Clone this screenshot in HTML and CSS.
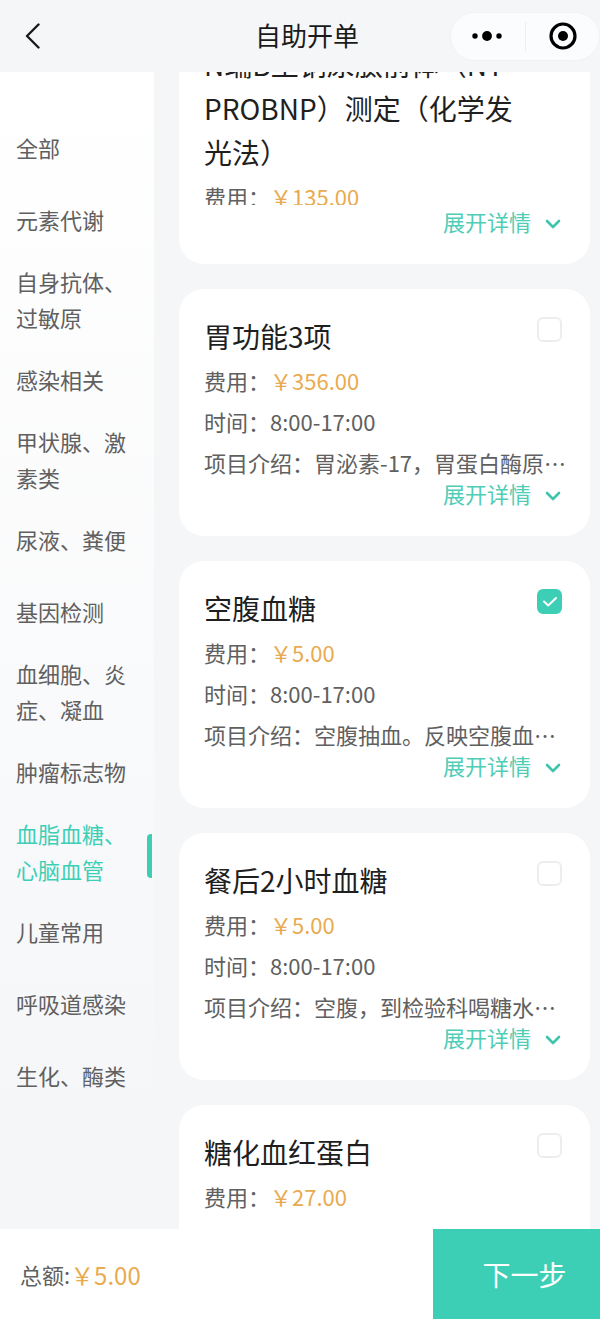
FILE: index.html
```
<!DOCTYPE html>
<html lang="zh-CN">
<head>
<meta charset="utf-8">
<meta name="viewport" content="width=device-width, initial-scale=1">
<title>自助开单</title>
<link rel="stylesheet" href="styles.css">
</head>
<body>
<div class="page">
  <header class="header">
    <button class="back" type="button" aria-label="返回">
      <svg width="16" height="28" viewBox="0 0 16 28" fill="none" stroke="currentColor" stroke-width="2.4" stroke-linecap="round" stroke-linejoin="round"><path d="M14.5 2.5 3 14l11.500 11.5"/></svg>
    </button>
    <h1 class="header-title">自助开单</h1>
    <div class="capsule">
      <button class="capsule-btn" type="button" aria-label="更多">
        <svg width="32" height="12" viewBox="0 0 32 12" fill="currentColor"><circle cx="4" cy="6" r="2.7"/><circle cx="16" cy="6" r="4.9"/><circle cx="28" cy="6" r="2.7"/></svg>
      </button>
      <button class="capsule-btn capsule-close" type="button" aria-label="关闭">
        <svg width="28" height="28" viewBox="0 0 28 28"><circle cx="14" cy="14" r="12" fill="none" stroke="currentColor" stroke-width="3.2"/><circle cx="14" cy="14" r="5" fill="currentColor"/></svg>
      </button>
    </div>
  </header>

  <div class="content">
    <nav class="sidebar">
      <button class="category" type="button">全部</button>
      <button class="category" type="button">元素代谢</button>
      <button class="category" type="button">自身抗体、<br>过敏原</button>
      <button class="category" type="button">感染相关</button>
      <button class="category" type="button">甲状腺、激<br>素类</button>
      <button class="category" type="button">尿液、粪便</button>
      <button class="category" type="button">基因检测</button>
      <button class="category" type="button">血细胞、炎<br>症、凝血</button>
      <button class="category" type="button">肿瘤标志物</button>
      <button class="category active" type="button">血脂血糖、<br>心脑血管</button>
      <button class="category" type="button">儿童常用</button>
      <button class="category" type="button">呼吸道感染</button>
      <button class="category" type="button">生化、酶类</button>
    </nav>

    <main class="list">
      <article class="card">
        <div class="card-body">
          <div class="card-head">
            <label class="card-title" for="item-1">N端B型钠尿肽前体（NT-PROBNP）测定（化学发光法）</label>
            <input class="check" id="item-1" type="checkbox">
          </div>
          <p class="row">费用：<span class="price">￥135.00</span></p>
        </div>
        <button class="expand" type="button">展开详情
          <svg class="chevron" width="16" height="10" viewBox="0 0 16 10"><path d="M2 2l6 6 6-6"/></svg>
        </button>
      </article>

      <article class="card">
        <div class="card-body">
          <div class="card-head">
            <label class="card-title" for="item-2">胃功能3项</label>
            <input class="check" id="item-2" type="checkbox">
          </div>
          <p class="row">费用：<span class="price">￥356.00</span></p>
          <p class="row">时间：8:00-17:00</p>
          <p class="row">项目介绍：胃泌素-17，胃蛋白酶原…</p>
        </div>
        <button class="expand" type="button">展开详情
          <svg class="chevron" width="16" height="10" viewBox="0 0 16 10"><path d="M2 2l6 6 6-6"/></svg>
        </button>
      </article>

      <article class="card">
        <div class="card-body">
          <div class="card-head">
            <label class="card-title" for="item-3">空腹血糖</label>
            <span class="check-wrap">
              <input class="check" id="item-3" type="checkbox" checked>
              <svg class="tick" width="16" height="12" viewBox="0 0 16 12"><path d="M2 5.5l4.2 4L14 2"/></svg>
            </span>
          </div>
          <p class="row">费用：<span class="price">￥5.00</span></p>
          <p class="row">时间：8:00-17:00</p>
          <p class="row">项目介绍：空腹抽血。反映空腹血…</p>
        </div>
        <button class="expand" type="button">展开详情
          <svg class="chevron" width="16" height="10" viewBox="0 0 16 10"><path d="M2 2l6 6 6-6"/></svg>
        </button>
      </article>

      <article class="card">
        <div class="card-body">
          <div class="card-head">
            <label class="card-title" for="item-4">餐后2小时血糖</label>
            <input class="check" id="item-4" type="checkbox">
          </div>
          <p class="row">费用：<span class="price">￥5.00</span></p>
          <p class="row">时间：8:00-17:00</p>
          <p class="row">项目介绍：空腹，到检验科喝糖水…</p>
        </div>
        <button class="expand" type="button">展开详情
          <svg class="chevron" width="16" height="10" viewBox="0 0 16 10"><path d="M2 2l6 6 6-6"/></svg>
        </button>
      </article>

      <article class="card">
        <div class="card-body">
          <div class="card-head">
            <label class="card-title" for="item-5">糖化血红蛋白</label>
            <input class="check" id="item-5" type="checkbox">
          </div>
          <p class="row">费用：<span class="price">￥27.00</span></p>
        </div>
      </article>
    </main>
  </div>

  <footer class="footer">
    <p class="total">总额:<span class="total-price">￥5.00</span></p>
    <button class="next" type="button">下一步</button>
  </footer>
</div>
</body>
</html>
```
FILE: styles.css
```
* {
  box-sizing: border-box;
}

body {
  margin: 0;
  background: #f5f6f8;
  color: #606060;
  font-family: "Noto Sans CJK SC", sans-serif;
  font-size: 22px;
  font-weight: 400;
}

h1,
p {
  margin: 0;
}

button {
  margin: 0;
  padding: 0;
  border: 0;
  background: none;
  color: inherit;
  font: inherit;
  cursor: pointer;
}

svg {
  display: block;
}

.page {
  display: flex;
  flex-direction: column;
  height: 100vh;
}

/* Header */
.header {
  display: grid;
  grid-template-columns: 164px 1fr 150px;
  align-items: center;
  flex: none;
  height: 72px;
  color: #1a1a1a;
}

.back {
  justify-self: start;
  padding: 8px 24px;
}

.header-title {
  padding-bottom: 2px;
  font-size: 26px;
  font-weight: 400;
  line-height: 40px;
  text-align: center;
}

.capsule {
  display: flex;
  height: 49px;
  border: 1px solid #f1f2f4;
  border-radius: 25px;
  background: #fbfcfd;
  color: #000;
}

.capsule-btn {
  display: flex;
  flex: 1;
  align-items: center;
  justify-content: center;
}

.capsule-close {
  position: relative;
  padding-left: 4px;
}

.capsule-close::before {
  position: absolute;
  top: 9px;
  bottom: 9px;
  left: 2px;
  width: 1px;
  background: #eceef0;
  content: "";
}

/* Content */
.content {
  display: flex;
  flex: 1;
  gap: 25px;
  min-height: 0;
  padding-right: 10px;
  overflow: hidden;
}

.sidebar {
  display: flex;
  flex: none;
  flex-direction: column;
  width: 154px;
  padding-top: 39px;
  background: linear-gradient(#fff, #f5f6f8 94%);
}

.category {
  position: relative;
  min-height: 72px;
  padding: 8px 16px;
  line-height: 36px;
  text-align: left;
  white-space: nowrap;
}

.category.active {
  color: #3dcfb6;
}

.category.active::after {
  position: absolute;
  top: 27px;
  right: 2px;
  width: 5px;
  height: 44px;
  border-radius: 4px 0 0 4px;
  background: #3dcfb6;
  content: "";
}

/* The list is scrolled part way into its first card */
.list {
  display: flex;
  flex: 1;
  flex-direction: column;
  gap: 25px;
  min-width: 0;
  margin-top: -55px;
}

.card {
  flex: none;
  padding: 25px 25px 23px;
  border-radius: 25px;
  background: #fff;
}

.card-body {
  height: 163px;
  overflow: hidden;
}

.card-head {
  display: flex;
  align-items: flex-start;
  gap: 12px;
  margin-bottom: 2px;
  padding-right: 3px;
}

.card-title {
  flex: 1;
  color: #1f1f1f;
  font-size: 28px;
  line-height: 44px;
}

.check-wrap {
  position: relative;
  display: flex;
}

.check {
  flex: none;
  width: 25px;
  height: 25px;
  margin: 3px 0 0;
  border: 2px solid #ededed;
  border-radius: 6px;
  background: #fff;
  appearance: none;
}

.check:checked {
  border-color: #3dcfb6;
  background: #3dcfb6;
}

.tick {
  position: absolute;
  top: 10px;
  left: 5px;
  fill: none;
  stroke: #fff;
  stroke-width: 2;
  stroke-linecap: round;
  stroke-linejoin: round;
  pointer-events: none;
}

.row {
  line-height: 41px;
  white-space: nowrap;
}

.price,
.total-price {
  color: #e9ab50;
}

.expand {
  display: flex;
  align-items: center;
  gap: 14px;
  margin-left: auto;
  padding: 0 4px 4px 0;
  color: #4fcdb6;
  line-height: 32px;
}

.chevron {
  margin-top: 6px;
  fill: none;
  stroke: #3fc4ac;
  stroke-width: 2.6;
  stroke-linecap: round;
  stroke-linejoin: round;
}

/* Footer */
.footer {
  display: flex;
  flex: none;
  height: 90px;
  background: #fff;
}

.total {
  display: flex;
  flex: 1;
  align-items: center;
  padding: 0 20px;
}

.total-price {
  font-size: 24px;
}

.next {
  width: 167px;
  padding-left: 16px;
  background: #3dcfb6;
  color: #fff;
  font-size: 28px;
}
```
